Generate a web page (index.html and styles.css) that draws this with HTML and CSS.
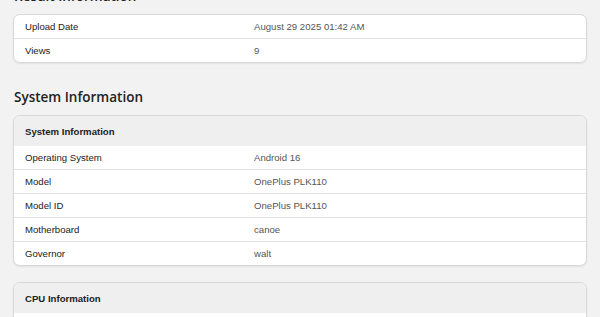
FILE: index.html
```html
<!DOCTYPE html>
<html lang="en">
<head>
<meta charset="utf-8">
<title>Result</title>
<link rel="stylesheet" href="styles.css">
</head>
<body>
<main class="page">
  <section class="section">
    <h2 class="section-title">Result Information</h2>
    <div class="card">
      <div class="row"><div class="name">Upload Date</div><div class="value">August 29 2025 01:42 AM</div></div>
      <div class="row"><div class="name">Views</div><div class="value">9</div></div>
    </div>
  </section>
  <section class="section">
    <h2 class="section-title">System Information</h2>
    <div class="card">
      <div class="card-head">System Information</div>
      <div class="row"><div class="name">Operating System</div><div class="value">Android 16</div></div>
      <div class="row"><div class="name">Model</div><div class="value">OnePlus PLK110</div></div>
      <div class="row"><div class="name">Model ID</div><div class="value">OnePlus PLK110</div></div>
      <div class="row"><div class="name">Motherboard</div><div class="value">canoe</div></div>
      <div class="row"><div class="name">Governor</div><div class="value">walt</div></div>
    </div>
    <div class="card">
      <div class="card-head">CPU Information</div>
      <div class="row row-empty"></div>
    </div>
  </section>
</main>
</body>
</html>
```

FILE: styles.css
```css
html, body {
  margin: 0;
  padding: 0;
  background: #f2f2f2;
  overflow: hidden;
}

body {
  font-family: "Liberation Sans", Arial, sans-serif;
  color: #222;
}

.page {
  display: flex;
  flex-direction: column;
  gap: 24px;
  padding: 0 13px;
  margin-top: -14px;
}

.section {
  display: flex;
  flex-direction: column;
  gap: 16px;
}

.section-title {
  font-family: "Open Sans", "Liberation Sans", sans-serif;
  font-weight: 600;
  font-size: 13.5px;
  line-height: 20px;
  margin: 0 0 -8px;
  padding-left: 1px;
  color: #222;
}

.card {
  background: #fff;
  border: 1px solid #d8d8d8;
  border-radius: 7px;
  box-shadow: 0 1px 2px rgba(0, 0, 0, 0.07);
  overflow: hidden;
}

.card-head {
  background: #efefef;
  height: 30px;
  display: flex;
  align-items: center;
  padding: 0 11px;
  font-weight: bold;
  font-size: 9.6px;
  color: #222;
}

.row {
  display: grid;
  grid-template-columns: 240px 1fr;
  height: 23px;
  align-items: center;
  font-size: 9.6px;
}

.row + .row {
  border-top: 1px solid #e4e4e4;
}

.name {
  padding-left: 11px;
  color: #222;
}

.value {
  color: #555;
}
```
